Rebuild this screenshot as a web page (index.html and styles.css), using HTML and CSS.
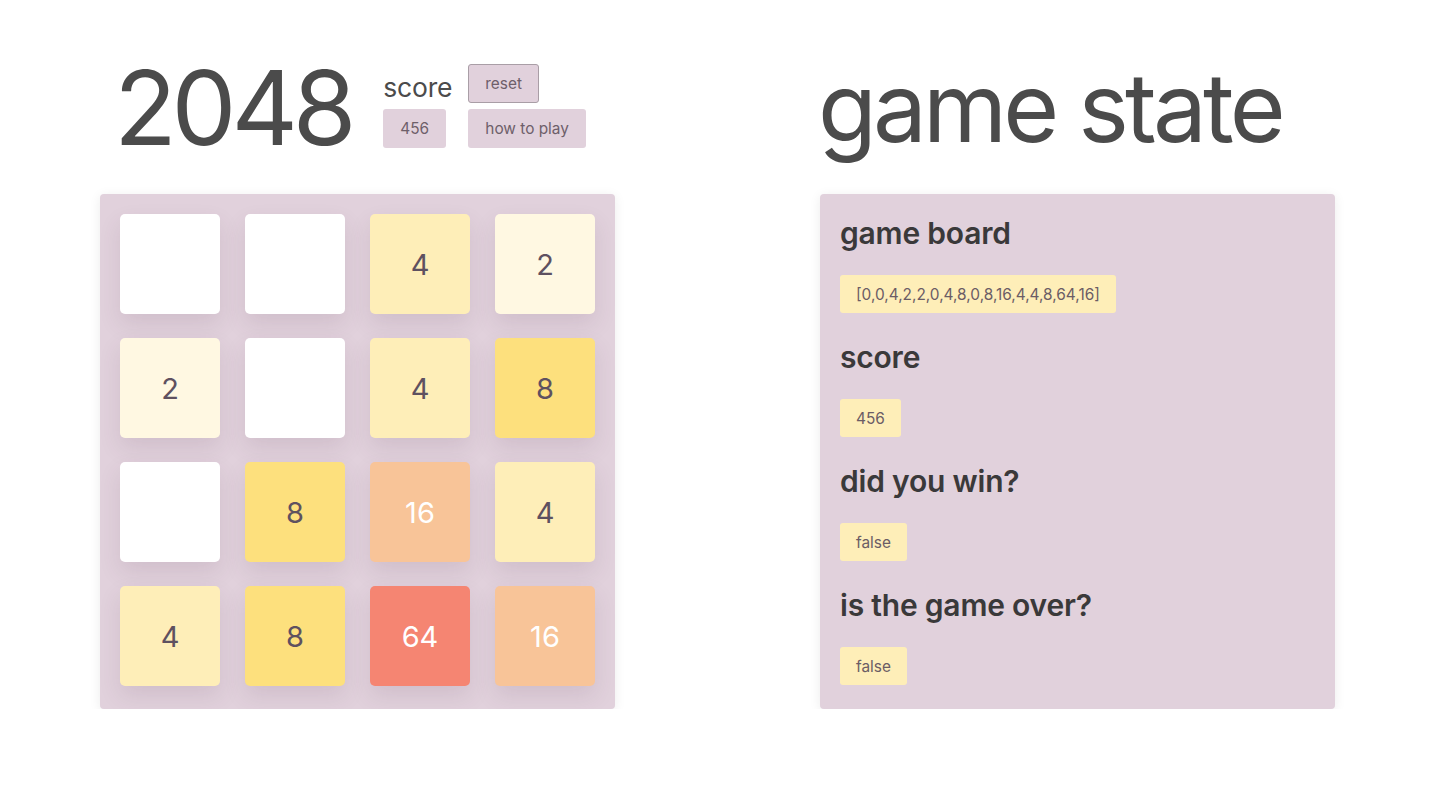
FILE: index.html
```html
<!DOCTYPE html>
<html>
<head>
<meta charset="utf-8">
<title>2048</title>
<link rel="stylesheet" href="styles.css">
</head>
<body>
<main class="page">
  <section class="col">
    <header class="head">
      <h1 class="logo">2048</h1>
      <div class="controls">
        <span class="score-label">score</span>
        <button class="btn btn-reset">reset</button>
        <span class="chip">456</span>
        <button class="btn">how to play</button>
      </div>
    </header>
    <div class="board">
      <div class="tile t0"></div>
      <div class="tile t0"></div>
      <div class="tile t4">4</div>
      <div class="tile t2">2</div>
      <div class="tile t2">2</div>
      <div class="tile t0"></div>
      <div class="tile t4">4</div>
      <div class="tile t8">8</div>
      <div class="tile t0"></div>
      <div class="tile t8">8</div>
      <div class="tile t16">16</div>
      <div class="tile t4">4</div>
      <div class="tile t4">4</div>
      <div class="tile t8">8</div>
      <div class="tile t64">64</div>
      <div class="tile t16">16</div>
    </div>
  </section>
  <section class="col">
    <header class="head">
      <h1 class="state-title">game state</h1>
    </header>
    <div class="panel">
      <div class="item">
        <h2 class="item-title">game board</h2>
        <span class="code">[0,0,4,2,2,0,4,8,0,8,16,4,4,8,64,16]</span>
      </div>
      <div class="item">
        <h2 class="item-title">score</h2>
        <span class="code">456</span>
      </div>
      <div class="item">
        <h2 class="item-title">did you win?</h2>
        <span class="code">false</span>
      </div>
      <div class="item">
        <h2 class="item-title">is the game over?</h2>
        <span class="code">false</span>
      </div>
    </div>
  </section>
</main>
</body>
</html>
```
FILE: styles.css
```css
* { box-sizing: border-box; }
html, body {
  margin: 0;
  padding: 0;
  background: #ffffff;
  font-family: Inter, "Noto Sans", sans-serif;
}
.page {
  display: flex;
  gap: 205px;
  padding: 40px 0 0 100px;
}
.col {
  width: 515px;
  display: flex;
  flex-direction: column;
}
.head {
  height: 134px;
  margin-bottom: 20px;
  display: flex;
  align-items: center;
}
.logo {
  margin: 0 0 0 14px;
  font-size: 103px;
  font-weight: 400;
  line-height: 1;
  color: #4b4b4b;
  letter-spacing: -5.2px;
}
.controls {
  margin-left: 32px;
  display: grid;
  grid-template-columns: auto auto;
  column-gap: 16px;
  row-gap: 6px;
  align-items: center;
  justify-items: start;
  margin-top: -2px;
}
.score-label {
  font-size: 26.5px;
  color: #4b4b4b;
  line-height: 31px;
  padding-top: 8px;
  letter-spacing: -0.2px;
}
.btn, .chip {
  height: 39px;
  display: inline-flex;
  align-items: center;
  padding: 0 17px;
  background: #e1d1dc;
  color: #6e5f6a;
  font-family: Inter, "Noto Sans", sans-serif;
  font-size: 15.4px;
  border: 0;
  border-radius: 3px;
}
.btn-reset {
  border: 1px solid #a99ea6;
  padding: 0 16px;
}
.state-title {
  margin: 0 0 0 -2px;
  font-size: 96px;
  font-weight: 400;
  line-height: 1;
  color: #4b4b4b;
  letter-spacing: -3.9px;
}
.board {
  width: 515px;
  height: 515px;
  padding: 20px;
  background: #e1d1dc;
  border-radius: 4px;
  box-shadow: 0 2px 12px rgba(0, 0, 0, 0.08);
  display: grid;
  grid-template-columns: repeat(4, 100px);
  grid-template-rows: repeat(4, 100px);
  align-content: start;
  column-gap: 25px;
  row-gap: 24px;
}
.tile {
  border-radius: 5px;
  display: flex;
  align-items: center;
  justify-content: center;
  font-size: 29px;
  color: #5e5160;
  box-shadow: 0 10px 22px rgba(90, 60, 80, 0.12);
}
.t0 { background: #ffffff; }
.t2 { background: #fff8e2; }
.t4 { background: #feeeb8; }
.t8 { background: #fde07d; }
.t16 { background: #f8c498; color: #ffffff; }
.t64 { background: #f58572; color: #ffffff; }
.panel {
  width: 515px;
  height: 515px;
  padding: 20px;
  background: #e1d1dc;
  border-radius: 4px;
  box-shadow: 0 2px 12px rgba(0, 0, 0, 0.08);
  display: flex;
  flex-direction: column;
  gap: 25px;
}
.item {
  display: flex;
  flex-direction: column;
  align-items: flex-start;
  gap: 23px;
}
.item-title {
  margin: 0;
  font-size: 30px;
  font-weight: 600;
  line-height: 38px;
  color: #3a393a;
  letter-spacing: -0.2px;
}
.code {
  height: 38px;
  display: inline-flex;
  align-items: center;
  padding: 0 16px;
  background: #feeeb8;
  color: #6b5c65;
  font-size: 15.4px;
  border-radius: 3px;
}
```
